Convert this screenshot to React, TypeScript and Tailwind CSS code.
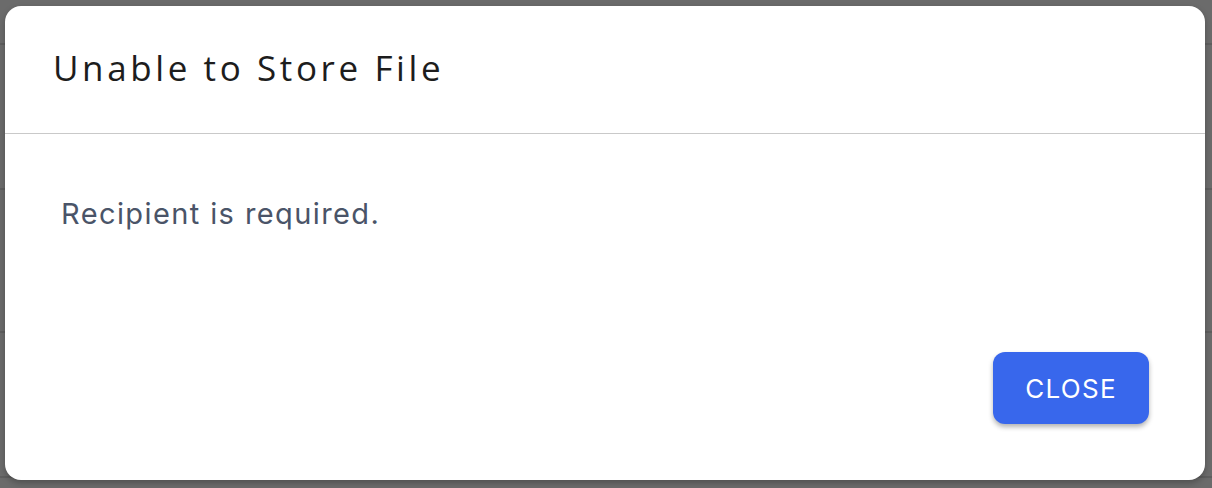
import React from "react";

export default function App() {
  return (
    <div className="relative h-[488px] w-[1212px] overflow-hidden bg-[#6b6b6b]">
      {/* underlying page rows seen through the backdrop */}
      <div className="flex flex-col pt-[43px]">
        <div className="h-[145px] border-t-2 border-[#5e5e5e]" />
        <div className="h-[143px] border-t-2 border-[#5e5e5e]" />
        <div className="h-[145px] border-t-2 border-[#5e5e5e]" />
        <div className="h-[20px] border-t-2 border-[#5e5e5e]" />
      </div>

      <div className="absolute left-[5px] top-[6px] flex h-[474px] w-[1200px] flex-col rounded-[16px] bg-white shadow-[0_3px_6px_rgba(0,0,0,0.25)]">
        <div className="flex h-[128px] items-center border-b border-[#c9c9c9] pl-[48px]">
          <h2 className="pb-[2px] text-[35px] font-normal tracking-[3.6px] text-[#1d1d1d] [font-family:'Open_Sans','Lato',sans-serif]">
            Unable to Store File
          </h2>
        </div>
        <div className="flex flex-1 flex-col px-[56px] pt-[63px] pb-[56px]">
          <p className="text-[29px] leading-[34px] tracking-[1.4px] text-[#4a5468] [font-family:Inter,'Noto_Sans',sans-serif]">
            Recipient is required.
          </p>
          <div className="mt-auto flex justify-end">
            <button className="h-[72px] w-[156px] rounded-[12px] bg-[#3867ec] text-[26px] font-normal tracking-[1.3px] text-white shadow-[0_3px_5px_rgba(0,0,0,0.3)] [font-family:Inter,Roboto,sans-serif]">
              CLOSE
            </button>
          </div>
        </div>
      </div>
    </div>
  );
}
